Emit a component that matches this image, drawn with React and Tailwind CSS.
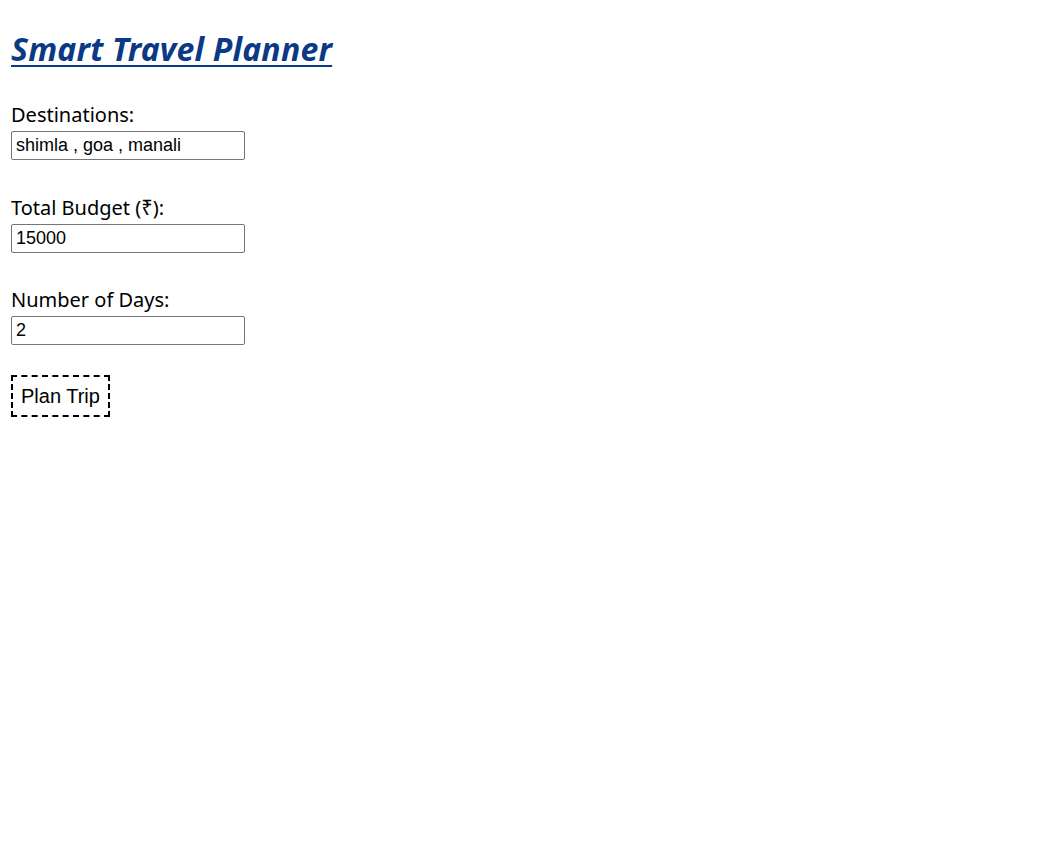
export default function App() {
  return (
    <div className="min-h-screen bg-white px-[11px] pt-[27px] text-black" style={{ fontFamily: '"Noto Sans", sans-serif' }}>
      <h1 className="text-[32px] font-bold italic leading-[44px] tracking-[0.2px] text-[#0b3a85] underline decoration-2 underline-offset-[4px]">
        Smart Travel Planner
      </h1>

      <form className="mt-[33px] flex flex-col" onSubmit={(e) => e.preventDefault()}>
        <label className="pb-[6px] text-[20px] leading-[21px]">Destinations:</label>
        <input
          type="text"
          defaultValue="shimla , goa , manali"
          className="h-[29px] w-[234px] rounded-[2px] border border-[#767676] px-[4px] text-[18px] font-['Liberation_Sans',Arial,sans-serif]"
        />

        <label className="mt-[37px] pb-[6px] text-[20px] leading-[21px]">Total Budget (₹):</label>
        <input
          type="number"
          defaultValue="15000"
          className="h-[29px] w-[234px] rounded-[2px] border border-[#767676] px-[4px] text-[18px] font-['Liberation_Sans',Arial,sans-serif]"
        />

        <label className="mt-[36px] pb-[6px] text-[20px] leading-[21px]">Number of Days:</label>
        <input
          type="number"
          defaultValue="2"
          className="h-[29px] w-[234px] rounded-[2px] border border-[#767676] px-[4px] text-[18px] font-['Liberation_Sans',Arial,sans-serif]"
        />

        <div className="mt-[30px]">
          <button
            type="submit"
            className="h-[42px] border-2 border-dashed border-black bg-white px-[8px] text-[20px] font-['Liberation_Sans',Arial,sans-serif]"
          >
            Plan Trip
          </button>
        </div>
      </form>
    </div>
  );
}
